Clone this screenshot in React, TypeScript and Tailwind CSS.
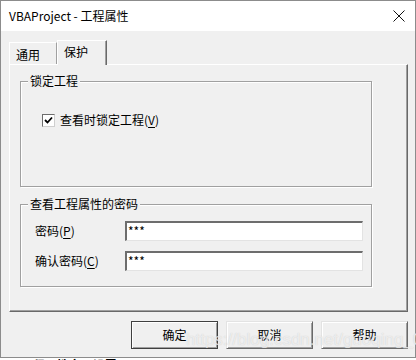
import React from "react";

const font = { fontFamily: '"Noto Sans CJK SC", "Noto Sans", sans-serif' };

function U({ children }: { children: React.ReactNode }) {
  return <span className="underline underline-offset-2">{children}</span>;
}

function Group({
  legend,
  className,
  children,
}: {
  legend: string;
  className: string;
  children?: React.ReactNode;
}) {
  return (
    <div
      className={`relative border border-[#a0a0a0] shadow-[inset_1px_1px_0_#ffffff,1px_1px_0_#ffffff] ${className}`}
    >
      <span className="absolute left-[7px] top-[-9px] bg-[#f0f0f0] px-[2px] text-[12px] leading-[16px] text-black">
        {legend}
      </span>
      {children}
    </div>
  );
}

function Input() {
  return (
    <div className="h-[20px] w-[238px] border-t-2 border-l-2 border-t-[#6d6d6d] border-l-[#6d6d6d] border-b border-r border-b-[#e3e3e3] border-r-[#e3e3e3] bg-white pl-[1px] text-[12px] leading-[16px] text-black">
      ***
    </div>
  );
}

function Button({ label, def }: { label: string; def?: boolean }) {
  return (
    <div
      className={`flex h-[28px] w-[87px] items-center justify-center bg-[#f0f0f0] text-[12px] text-black ${
        def
          ? "border border-[#404040] shadow-[inset_1px_1px_0_#ffffff,inset_-1px_-1px_0_#a0a0a0]"
          : "border border-t-[#e3e3e3] border-l-[#e3e3e3] border-r-[#696969] border-b-[#696969] shadow-[inset_1px_1px_0_#ffffff,inset_-1px_-1px_0_#a0a0a0]"
      }`}
    >
      {label}
    </div>
  );
}

export default function App() {
  return (
    <div className="relative h-[360px] w-[416px] overflow-hidden bg-white" style={font}>
      <div className="flex h-[358px] w-[416px] flex-col border border-[#8c8c8c] bg-[#f0f0f0]">
        {/* Title bar */}
        <div className="flex h-[30px] items-center justify-between bg-white pl-[8px] pr-[9px]">
          <span className="text-[12px] leading-[18px] text-black">VBAProject - 工程属性</span>
          <svg width="12" height="12" viewBox="0 0 12 12" className="mr-[1px]">
            <path d="M0.5 0.5 L11.5 11.5 M11.5 0.5 L0.5 11.5" stroke="#111" strokeWidth="1" fill="none" />
          </svg>
        </div>

        {/* Body */}
        <div className="flex flex-col pl-[8px] pt-[9px]">
          {/* Tabs */}
          <div className="flex h-[24px] items-end">
            <div className="flex h-[22px] w-[48px] items-center border-t border-l border-t-white border-l-white border-r border-r-[#a0a0a0] pl-[6px] pt-[2px] text-[12px] text-black">
              通用
            </div>
            <div className="relative z-10 -mb-[1px] flex h-[25px] w-[50px] items-start border-t border-l border-t-white border-l-white border-r border-r-[#696969] bg-[#f0f0f0] pl-[6px] pt-[3px] text-[12px] leading-[16px] text-black shadow-[inset_-1px_0_0_#a0a0a0]">
              保护
            </div>
          </div>

          {/* Panel */}
          <div className="flex h-[248px] w-[399px] flex-col border-t border-l border-t-white border-l-white border-r border-b border-r-[#696969] border-b-[#696969] pl-[10px] pt-[16px] shadow-[inset_-1px_-1px_0_#a0a0a0]">
            <Group legend="锁定工程" className="h-[106px] w-[352px]">
              <div className="ml-[21px] mt-[30px] flex items-center">
                <div className="flex h-[13px] w-[13px] items-center justify-center border border-t-[#6d6d6d] border-l-[#6d6d6d] border-r-[#cfcfcf] border-b-[#cfcfcf] bg-white">
                  <svg width="9" height="9" viewBox="0 0 9 9">
                    <path d="M1 4 L3.5 6.5 L8 1.5" stroke="#000" strokeWidth="1.8" fill="none" />
                  </svg>
                </div>
                <span className="ml-[5px] text-[12px] leading-[16px] text-black">
                  查看时锁定工程(<U>V</U>)
                </span>
              </div>
            </Group>

            <Group legend="查看工程属性的密码" className="mt-[17px] h-[83px] w-[352px]">
              <div className="ml-[14px] mt-[16px] flex flex-col gap-[10px]">
                <div className="flex items-center">
                  <span className="w-[90px] text-[12px] leading-[16px] text-black">
                    密码(<U>P</U>)
                  </span>
                  <Input />
                </div>
                <div className="flex items-center">
                  <span className="w-[90px] text-[12px] leading-[16px] text-black">
                    确认密码(<U>C</U>)
                  </span>
                  <Input />
                </div>
              </div>
            </Group>
          </div>

          {/* Buttons */}
          <div className="ml-[122px] mt-[9px] flex gap-[8px]">
            <Button label="确定" def />
            <Button label="取消" />
            <Button label="帮助" />
          </div>
        </div>
      </div>

      {/* partially visible content below the dialog */}
      <div className="h-[2px] overflow-hidden bg-white pl-[6px]">
        <div className="text-[12px] font-bold leading-[14px] text-black">■ 工程属性窗口设置</div>
      </div>

      {/* watermark */}
      <div
        className="pointer-events-none absolute left-[186px] top-[329px] text-[17px] leading-[22px] text-[rgba(250,250,250,0.7)]"
        style={{ fontFamily: '"Liberation Sans", Arial, sans-serif', textShadow: "0 0 1px rgba(150,150,150,0.45)" }}
      >
        https://blog.csdn.net/guoqing_0
      </div>
    </div>
  );
}
